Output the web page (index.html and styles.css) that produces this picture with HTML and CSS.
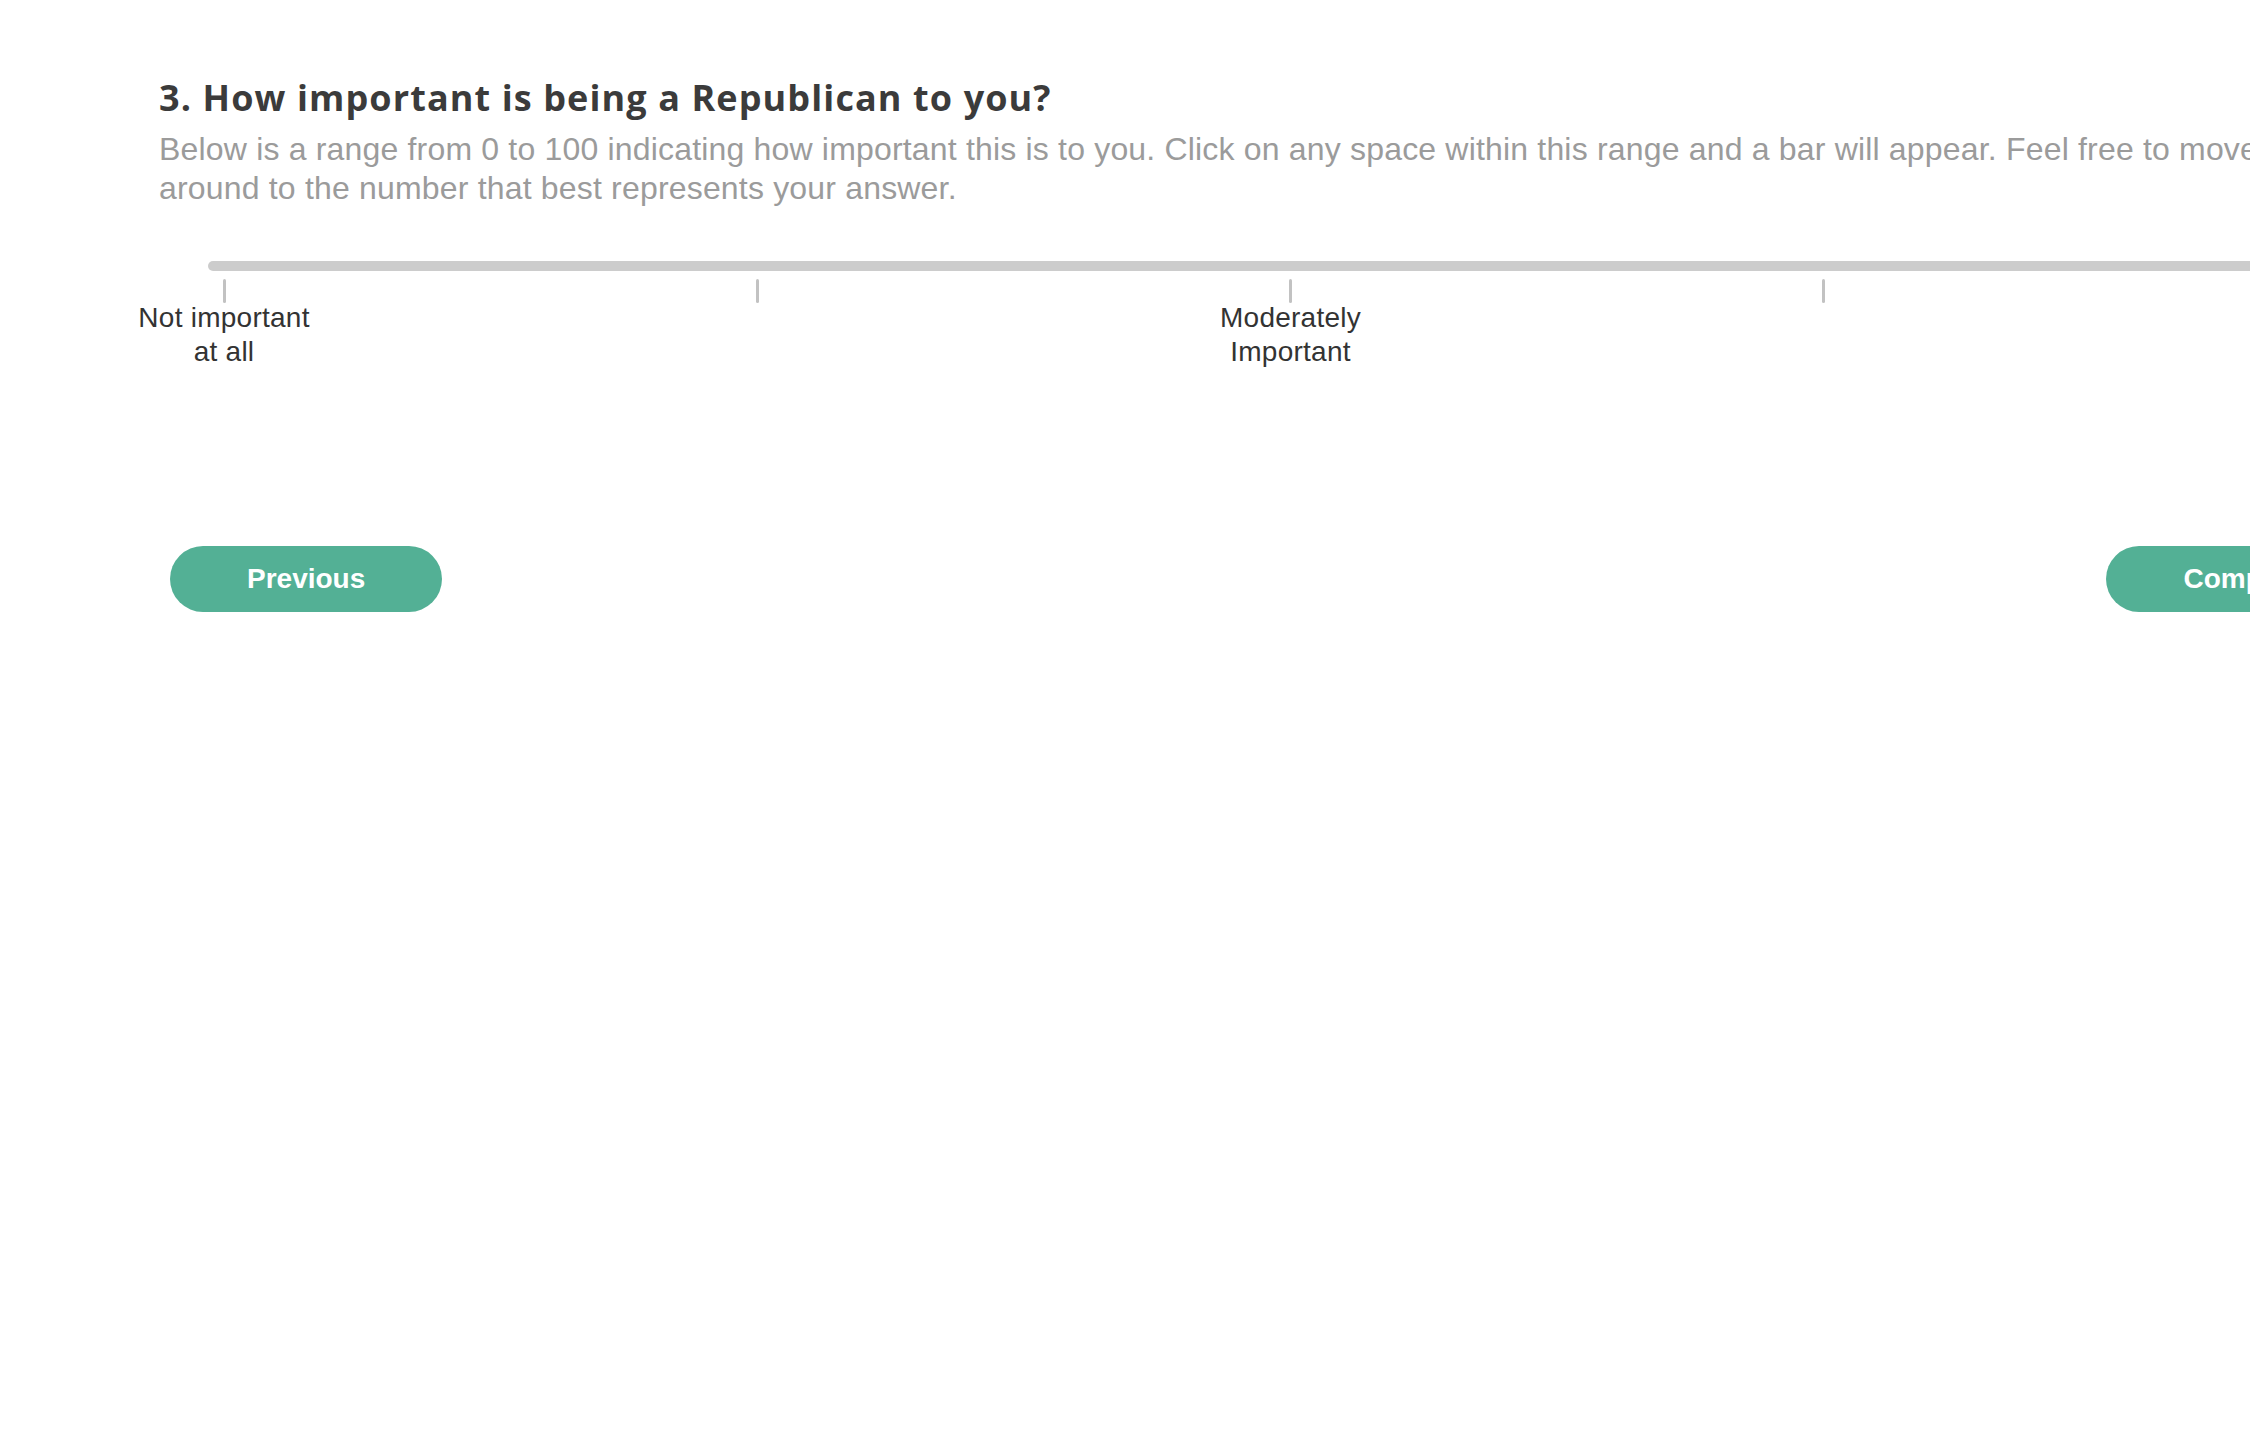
FILE: index.html
```html
<!DOCTYPE html>
<html lang="en">
<head>
<meta charset="utf-8">
<title>Question 3</title>
<link rel="stylesheet" href="styles.css">
</head>
<body>
<main class="page">
  <section class="question">
    <h1 class="q-title">3. How important is being a Republican to you?</h1>
    <p class="q-desc">Below is a range from 0 to 100 indicating how important this is to you. Click on any space within this range and a bar will appear. Feel free to move the bar around to the number that best represents your answer.</p>

    <div class="slider">
      <div class="track"></div>
      <div class="ticks">
        <div class="tick">
          <span class="tick-line"></span>
          <span class="tick-label">Not important<br>at all</span>
        </div>
        <div class="tick">
          <span class="tick-line"></span>
          <span class="tick-label"></span>
        </div>
        <div class="tick">
          <span class="tick-line"></span>
          <span class="tick-label">Moderately<br>Important</span>
        </div>
        <div class="tick">
          <span class="tick-line"></span>
          <span class="tick-label"></span>
        </div>
        <div class="tick">
          <span class="tick-line"></span>
          <span class="tick-label">Extremely<br>Important</span>
        </div>
      </div>
    </div>

    <div class="nav">
      <button class="btn" type="button">Previous</button>
      <button class="btn" type="button">Complete</button>
    </div>
  </section>
</main>
</body>
</html>
```

FILE: styles.css
```css
html, body {
  margin: 0;
  padding: 0;
  background: #ffffff;
  overflow: hidden;
}

.page {
  padding: 76px 0 0 159px;
  width: 2263px;
}

.question {
  display: flex;
  flex-direction: column;
}

.q-title {
  margin: 0;
  font-family: "Open Sans", Lato, sans-serif;
  font-weight: 700;
  font-size: 36px;
  line-height: 1.2;
  letter-spacing: 1.1px;
  color: #3b3b3b;
}

.q-desc {
  margin: 11px 0 0 0;
  font-family: "Liberation Sans", Arial, sans-serif;
  font-size: 32px;
  line-height: 38.4px;
  letter-spacing: 0.18px;
  color: #9b9b9b;
}

.slider {
  margin-top: 54px;
  display: flex;
  flex-direction: column;
}

.track {
  margin-left: 49px;
  width: 2165px;
  height: 10px;
  border-radius: 5px;
  background: #cccccc;
}

.ticks {
  margin-top: 8px;
  margin-left: 65px;
  width: 2133px;
  display: flex;
  justify-content: space-between;
}

.tick {
  width: 0;
  display: flex;
  flex-direction: column;
  align-items: center;
}

.tick-line {
  display: block;
  width: 3px;
  height: 24px;
  border-radius: 2px;
  background: #c2c2c2;
}

.tick-label {
  display: block;
  margin-top: -2px;
  min-height: 68px;
  white-space: nowrap;
  text-align: center;
  font-family: "Liberation Sans", Arial, sans-serif;
  font-size: 28px;
  line-height: 34px;
  letter-spacing: 0.25px;
  color: #333333;
}

.nav {
  margin-top: 177px;
  margin-left: 11px;
  width: 2218px;
  display: flex;
  justify-content: space-between;
}

.btn {
  height: 66px;
  padding: 0 77px;
  border: none;
  border-radius: 33px;
  background: #53b095;
  color: #ffffff;
  font-family: "Liberation Sans", Arial, sans-serif;
  font-weight: 700;
  font-size: 28px;
  line-height: 1;
  cursor: pointer;
}
```
